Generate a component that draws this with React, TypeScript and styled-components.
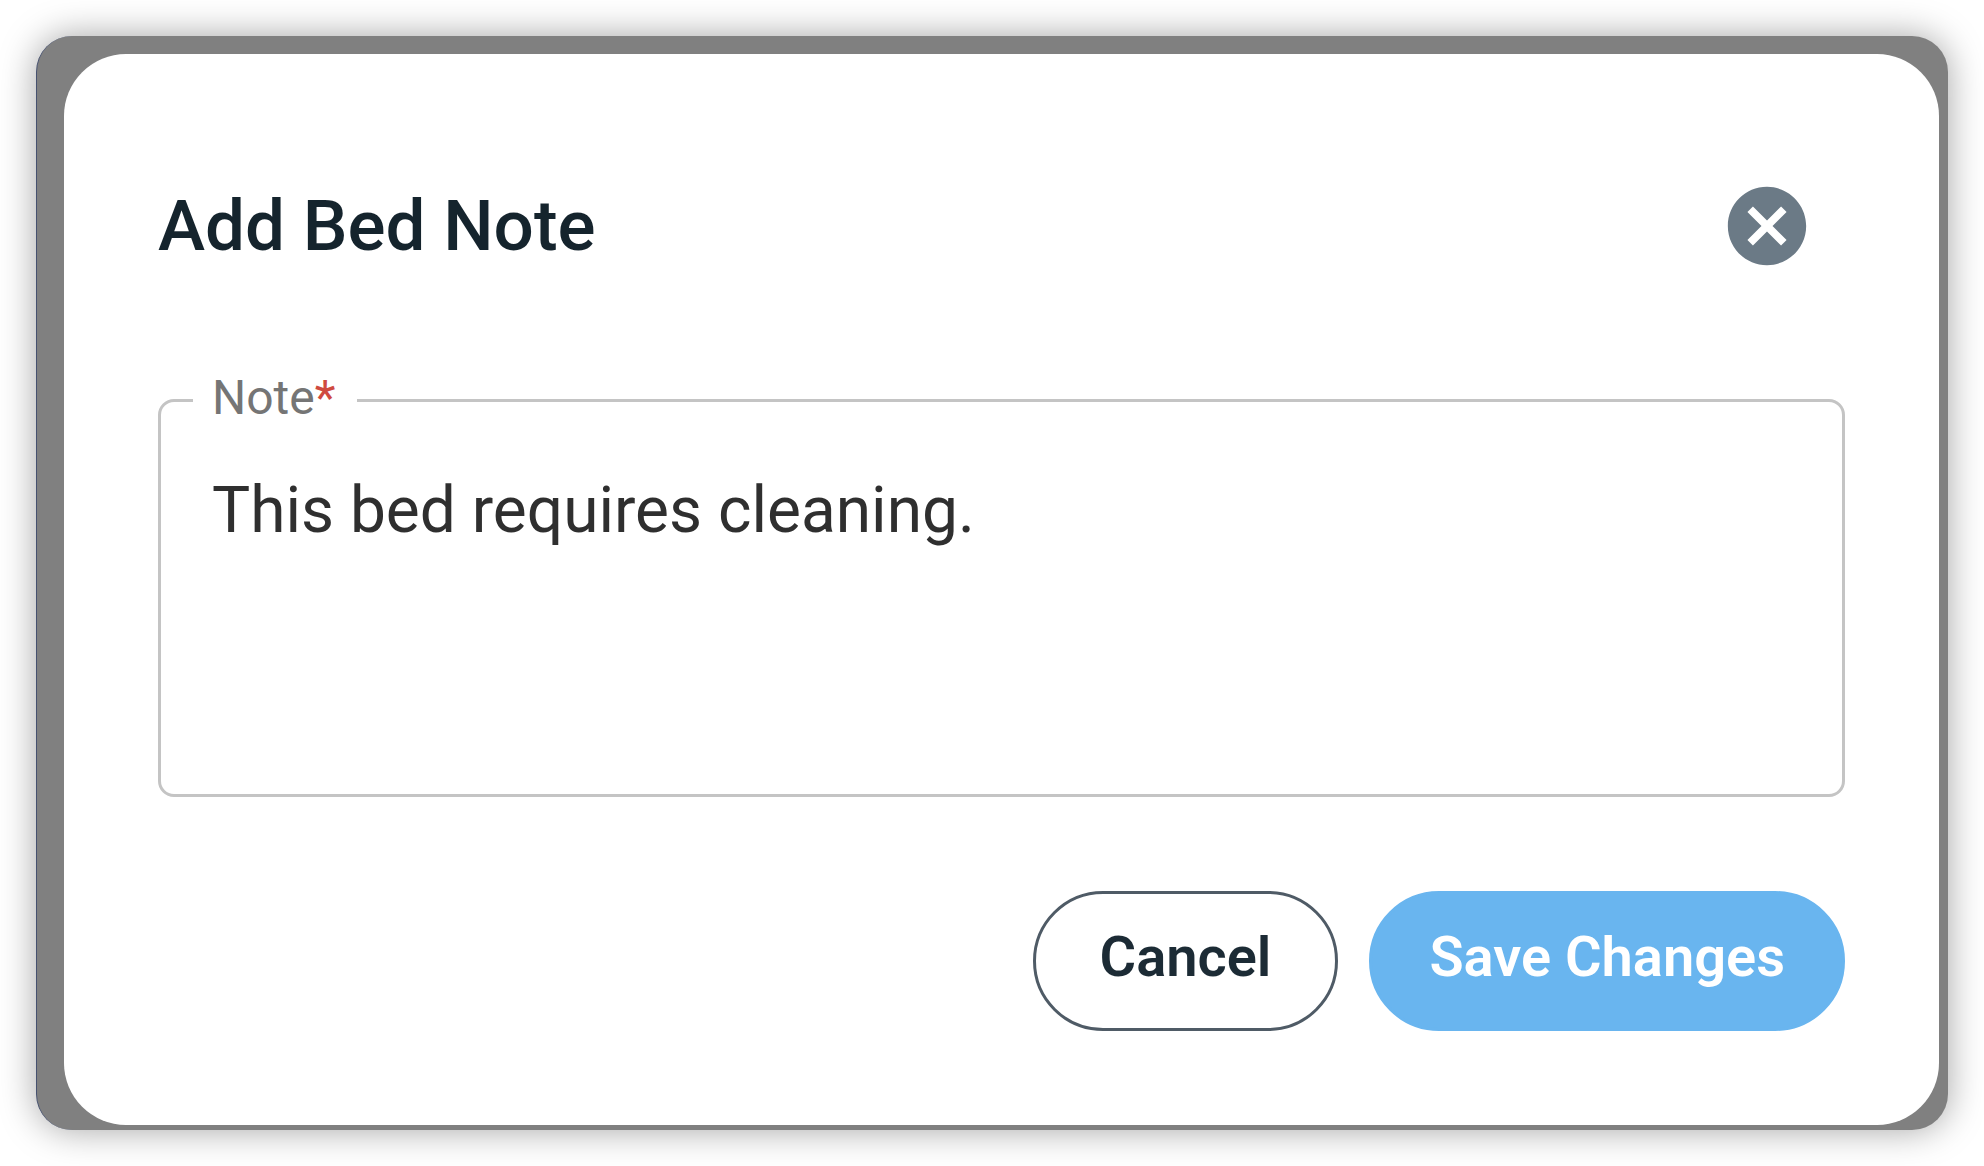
import React, { useState } from "react";
import styled, { createGlobalStyle } from "styled-components";
import { MdCancel } from "react-icons/md";

const GlobalStyle = createGlobalStyle`
  *, *::before, *::after { box-sizing: border-box; }
  body {
    margin: 0;
    background: #ffffff;
    font-family: Roboto, "Liberation Sans", sans-serif;
  }
`;

const Page = styled.main`
  display: flex;
  min-height: 100vh;
  padding: 36px;
`;

const Backdrop = styled.div`
  display: flex;
  flex: 1;
  min-width: 0;
  padding: 18px 9px 5px 27px;
  border-left: 1px solid #46516f;
  border-radius: 36px;
  background: #808080;
  box-shadow: 0 0 36px rgba(0, 0, 0, 0.36);
`;

const Dialog = styled.form`
  display: flex;
  flex: 1;
  flex-direction: column;
  min-width: 0;
  padding: 94px 94px 92px;
  border-radius: 62px;
  background: #ffffff;
`;

const Header = styled.header`
  display: flex;
  align-items: center;
  justify-content: space-between;
  padding: 31px 31px 31px 0;
  margin-bottom: 66px;
`;

const Title = styled.h1`
  margin: 0;
  color: #15242d;
  font-size: 71px;
  font-weight: 500;
  line-height: 84px;
`;

const CloseButton = styled.button`
  display: flex;
  padding: 0;
  border: 0;
  background: none;
  color: #6b7a86;
  cursor: pointer;
`;

const Field = styled.fieldset`
  min-width: 0;
  margin: 0 0 94px;
  padding: 0;
  border: 3px solid #c4c4c4;
  border-radius: 16px;
`;

const Legend = styled.legend`
  margin-left: 32px;
  padding: 0 22px 4px 19px;
  color: #757575;
  font-size: 48px;
  line-height: 56px;
`;

const Required = styled.span`
  color: #cf4a3f;
`;

const NoteInput = styled.textarea`
  display: block;
  width: 100%;
  padding: 45px 51px 31px;
  border: 0;
  outline: 0;
  resize: none;
  overflow: hidden;
  background: transparent;
  color: #2f2f2f;
  font-family: inherit;
  font-size: 64px;
  line-height: 72px;
`;

const Actions = styled.footer`
  display: flex;
  justify-content: flex-end;
  gap: 31px;
`;

const Button = styled.button<{ $primary?: boolean }>`
  padding: ${(p) => (p.$primary ? "32px 57px 40px" : "32px 64px 40px")};
  border: 3px solid ${(p) => (p.$primary ? "#69b5ef" : "#4f5b66")};
  border-radius: 72px;
  background: ${(p) => (p.$primary ? "#69b5ef" : "#ffffff")};
  color: ${(p) => (p.$primary ? "#ffffff" : "#1c2b35")};
  font-family: inherit;
  font-size: 56px;
  font-weight: 600;
  line-height: 62px;
  white-space: nowrap;
  cursor: pointer;
`;

export default function App() {
  const [note, setNote] = useState("This bed requires cleaning.");

  return (
    <>
      <GlobalStyle />
      <Page>
        <Backdrop>
          <Dialog
            role="dialog"
            aria-labelledby="dialog-title"
            onSubmit={(e: React.FormEvent) => e.preventDefault()}
          >
            <Header>
              <Title id="dialog-title">Add Bed Note</Title>
              <CloseButton type="button" aria-label="Close">
                <MdCancel size={94} aria-hidden="true" />
              </CloseButton>
            </Header>
            <Field>
              <Legend>
                <label htmlFor="note">
                  Note<Required>*</Required>
                </label>
              </Legend>
              <NoteInput
                id="note"
                rows={4}
                required
                spellCheck={false}
                value={note}
                onChange={(e) => setNote(e.target.value)}
              />
            </Field>
            <Actions>
              <Button type="button">Cancel</Button>
              <Button type="submit" $primary>
                Save Changes
              </Button>
            </Actions>
          </Dialog>
        </Backdrop>
      </Page>
    </>
  );
}
